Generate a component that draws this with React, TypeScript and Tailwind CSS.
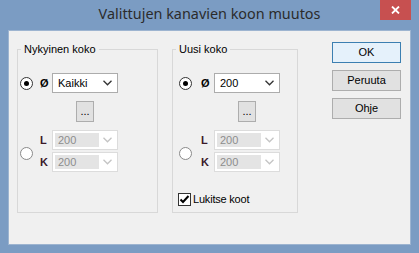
import React from "react";

const font = { fontFamily: '"Liberation Sans", Arial, sans-serif' };

function Radio({ checked }: { checked?: boolean }) {
  return (
    <div
      className={`w-[13px] h-[13px] rounded-full border flex items-center justify-center bg-white shrink-0 ${
        checked ? "border-[#333333]" : "border-[#8a8a8a]"
      }`}
    >
      {checked && <div className="w-[5px] h-[5px] rounded-full bg-black" />}
    </div>
  );
}

function Chevron({ disabled }: { disabled?: boolean }) {
  return (
    <svg width="9" height="6" viewBox="0 0 9 6" className="shrink-0">
      <path
        d="M0.5 0.8 L4.5 4.8 L8.5 0.8"
        fill="none"
        stroke={disabled ? "#c4c4c4" : "#333333"}
        strokeWidth="1.3"
      />
    </svg>
  );
}

function Combo({ value, disabled }: { value: string; disabled?: boolean }) {
  if (disabled) {
    return (
      <div className="w-[66px] h-[20px] border border-[#dcdcdc] bg-white flex items-center p-[2px] shrink-0">
        <div className="h-full w-[44px] bg-[#e4e4e4] flex items-center pl-[3px] text-[11px] text-[#8d8d8d]">
          {value}
        </div>
        <div className="flex-1 flex justify-center">
          <Chevron disabled />
        </div>
      </div>
    );
  }
  return (
    <div className="w-[66px] h-[20px] border border-[#acacac] bg-white flex items-center pl-[5px] pr-[5px] justify-between shrink-0">
      <span className="text-[11px] text-black">{value}</span>
      <Chevron />
    </div>
  );
}

function DotsButton() {
  return (
    <div className="w-[18px] h-[21px] border border-[#adadad] bg-[#e1e1e1] flex items-end justify-center pb-[4px] text-[11px] leading-none text-black">
      ...
    </div>
  );
}

function Group({
  title,
  width,
  padLeft,
  radioGap,
  symW,
  checkbox,
}: {
  title: string;
  width: number;
  padLeft: string;
  radioGap: string;
  symW: string;
  checkbox?: boolean;
}) {
  return (
    <fieldset
      className="border border-[#d8d8d8] h-[170px] shrink-0"
      style={{ width }}
    >
      <legend className="ml-[3px] px-[3px] text-[11px] leading-[13px] text-black">
        {title}
      </legend>
      <div className={`flex flex-col pt-[17px] ${padLeft}`}>
        <div className="flex items-center">
          <Radio checked />
          <span className={`${radioGap} ${symW} text-[11px] font-bold text-black`}>Ø</span>
          <Combo value={title === "Uusi koko" ? "200" : "Kaikki"} />
        </div>
        <div className="flex mt-[8px]">
          <div className="w-[13px]" />
          <div className={`${radioGap} ${symW}`} />
          <div className="w-[66px] flex justify-center">
            <DotsButton />
          </div>
        </div>
        <div className="flex mt-[8px]">
          <div className="mt-[17px]">
            <Radio />
          </div>
          <div className="flex flex-col gap-[2px]">
            <div className="flex items-center">
              <span className={`${radioGap} ${symW} text-[11px] font-bold text-[#3a1a2a]`}>L</span>
              <Combo value="200" disabled />
            </div>
            <div className="flex items-center">
              <span className={`${radioGap} ${symW} text-[11px] font-bold text-[#3a1a2a]`}>K</span>
              <Combo value="200" disabled />
            </div>
          </div>
        </div>
        {checkbox && (
          <div className="flex items-center mt-[19px] -ml-[1px]">
            <div className="w-[13px] h-[13px] border border-[#333333] bg-white flex items-center justify-center">
              <svg width="11" height="11" viewBox="0 0 11 11">
                <path d="M1.5 5.5 L4 8 L9.5 2" fill="none" stroke="#000" strokeWidth="2" />
              </svg>
            </div>
            <span className="ml-[2px] text-[11px] tracking-[-0.2px] text-black">Lukitse koot</span>
          </div>
        )}
      </div>
    </fieldset>
  );
}

function Btn({ label, primary }: { label: string; primary?: boolean }) {
  return (
    <div
      className={`w-[69px] h-[21px] flex items-center justify-center text-[11px] text-black ${
        primary ? "border border-[#3c7fb1] bg-[#e5f1fb]" : "border border-[#adadad] bg-[#e1e1e1]"
      }`}
    >
      {label}
    </div>
  );
}

export default function App() {
  return (
    <div
      className="w-[419px] h-[253px] bg-[#7b9cc3] flex flex-col overflow-hidden"
      style={font}
    >
      <div className="h-[30px] grid grid-cols-[1fr_auto_1fr]">
        <div />
        <div
          className="pt-[4px] text-[14.4px] text-[#2b2b2b] leading-[20px]"
          style={{ fontFamily: '"Noto Sans", "Open Sans", sans-serif' }}
        >
          Valittujen kanavien koon muutos
        </div>
        <div className="flex justify-end pr-[8px]">
          <div className="w-[31px] h-[20px] bg-[#c75050] flex items-center justify-center">
            <svg width="9" height="8" viewBox="0 0 9 8">
              <path d="M1 0.5 L8 7.5 M8 0.5 L1 7.5" stroke="#fff" strokeWidth="1.8" />
            </svg>
          </div>
        </div>
      </div>
      <div className="mx-[8px] h-[215px] bg-[#f0f0f0] border border-[#9db4d0] flex items-start pl-[8px] pt-[12px]">
        <Group title="Nykyinen koko" width={141} padLeft="pl-[2px]" radioGap="ml-[7px]" symW="w-[12px]" />
        <div className="ml-[14px]">
          <Group title="Uusi koko" width={126} padLeft="pl-[6px]" radioGap="ml-[9px]" symW="w-[13px]" checkbox />
        </div>
        <div className="ml-[34px] mt-[-1px] flex flex-col gap-[7px]">
          <Btn label="OK" primary />
          <Btn label="Peruuta" />
          <Btn label="Ohje" />
        </div>
      </div>
    </div>
  );
}
